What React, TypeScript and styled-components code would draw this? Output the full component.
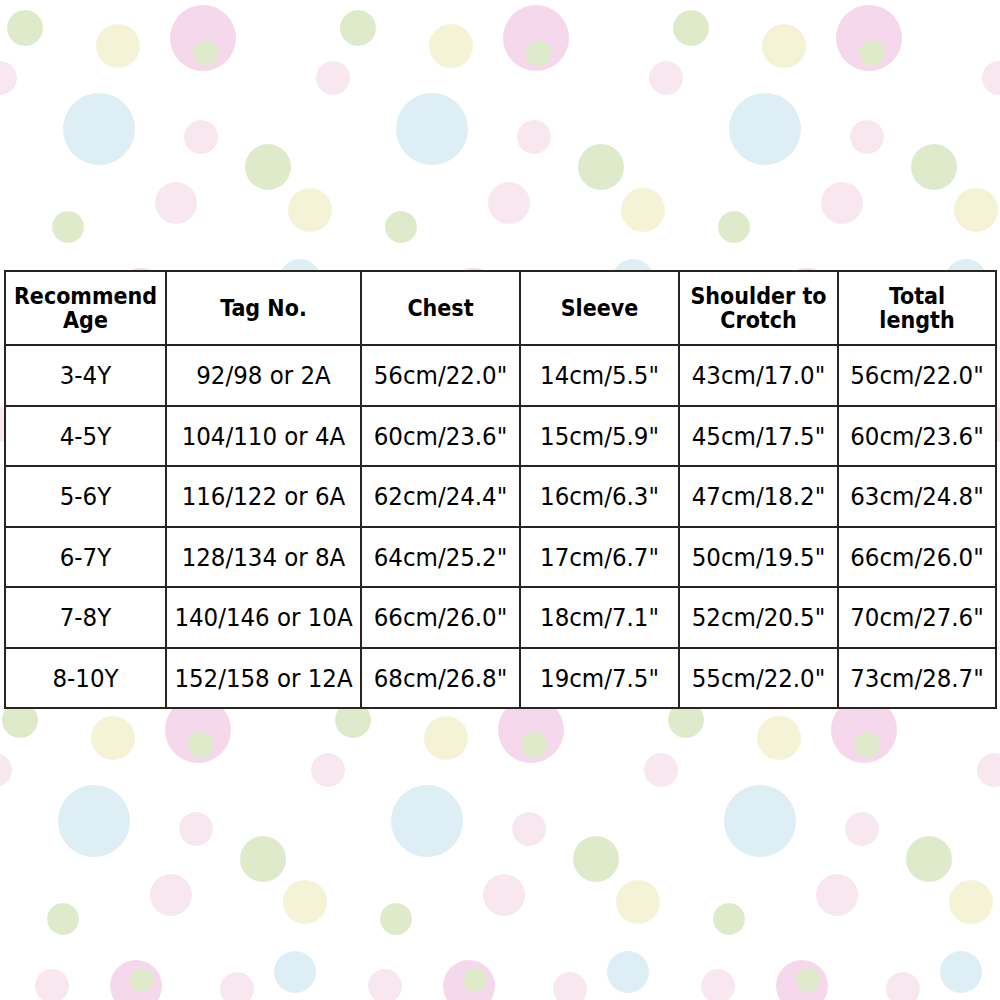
import { FunctionComponent } from 'react';
import styled, { createGlobalStyle } from 'styled-components';

// one tile of the polka dot wallpaper: [x, y, radius, colour]
const GREEN = '#dfeaca';
const YELLOW = '#f5f3d6';
const PINK = '#f5d8ec';
const PINK_LIGHT = '#f9e7f0';
const BLUE = '#deeef5';

const dots: [number, number, number, string][] = [
  [206, 53, 13, GREEN],
  [147, 288, 12, GREEN],
  [25, 28, 18, GREEN],
  [118, 46, 22, YELLOW],
  [203, 38, 33, PINK],
  [0, 78, 17, PINK_LIGHT],
  [333, 78, 17, PINK_LIGHT],
  [99, 129, 36, BLUE],
  [201, 137, 17, PINK_LIGHT],
  [268, 167, 23, GREEN],
  [176, 203, 21, PINK_LIGHT],
  [310, 210, 22, YELLOW],
  [68, 227, 16, GREEN],
  [57, 294, 17, PINK_LIGHT],
  [141, 294, 26, PINK],
  [242, 297, 17, PINK_LIGHT],
  [300, 280, 21, BLUE],
];

const dotLayers = dots
  .map(
    ([x, y, r, c]) =>
      `radial-gradient(circle ${r}px at ${x}px ${y}px, ${c} ${r - 0.6}px, transparent ${r + 0.4}px)`
  )
  .join(', ');

const GlobalStyle = createGlobalStyle`
  html, body {
    margin: 0;
    padding: 0;
    background: #fff;
  }
`;

const SPage = styled.div`
  width: 1000px;
  height: 1000px;
  display: flex;
  flex-direction: column;
  background-color: #fff;
  background-image: ${dotLayers};
  background-size: 333px 347px;
  background-repeat: repeat;
  font-family: 'DejaVu Sans Condensed', 'DejaVu Sans', sans-serif;
  font-stretch: condensed;
  color: #000;
  overflow: hidden;
`;

const STableWrap = styled.div`
  padding: 270px 3px 0 4px;
`;

const SBottom = styled.div<{ $shiftX: number; $shiftY: number }>`
  flex: 1;
  background-color: #fff;
  background-image: ${dotLayers};
  background-size: 333px 347px;
  background-position: ${(p) => `${p.$shiftX}px ${p.$shiftY}px`};
`;

const STable = styled.table`
  border-collapse: separate;
  border-spacing: 0;
  table-layout: fixed;
  width: 993px;
  border-top: 2px solid #2a2421;
  border-left: 2px solid #2a2421;
  background: #fff;
`;

const SCol = styled.col<{ $w: number }>`
  width: ${(p) => p.$w}px;
`;

const SHead = styled.th`
  height: 72px;
  padding: 0 2px;
  border-right: 2px solid #2a2421;
  border-bottom: 2px solid #2a2421;
  font-size: 23px;
  line-height: 24px;
  font-weight: bold;
  text-align: center;
  vertical-align: middle;
  white-space: nowrap;
`;

const SCell = styled.td`
  height: 58.5px;
  padding: 0;
  border-right: 2px solid #2a2421;
  border-bottom: 2px solid #2a2421;
  font-size: 25.5px;
  text-align: center;
  vertical-align: middle;
  white-space: nowrap;
`;

const columns: { lines: string[]; w: number }[] = [
  { lines: ['Recommend', 'Age'], w: 161 },
  { lines: ['Tag No.'], w: 195 },
  { lines: ['Chest'], w: 159 },
  { lines: ['Sleeve'], w: 159 },
  { lines: ['Shoulder to', 'Crotch'], w: 159 },
  { lines: ['Total', 'length'], w: 158 },
];

const rows: string[][] = [
  ['3-4Y', '92/98 or 2A', '56cm/22.0"', '14cm/5.5"', '43cm/17.0"', '56cm/22.0"'],
  ['4-5Y', '104/110 or 4A', '60cm/23.6"', '15cm/5.9"', '45cm/17.5"', '60cm/23.6"'],
  ['5-6Y', '116/122 or 6A', '62cm/24.4"', '16cm/6.3"', '47cm/18.2"', '63cm/24.8"'],
  ['6-7Y', '128/134 or 8A', '64cm/25.2"', '17cm/6.7"', '50cm/19.5"', '66cm/26.0"'],
  ['7-8Y', '140/146 or 10A', '66cm/26.0"', '18cm/7.1"', '52cm/20.5"', '70cm/27.6"'],
  ['8-10Y', '152/158 or 12A', '68cm/26.8"', '19cm/7.5"', '55cm/22.0"', '73cm/28.7"'],
];

const SizeTable: FunctionComponent = () => (
  <STable>
    <colgroup>
      {columns.map((c) => (
        <SCol key={c.lines.join(' ')} $w={c.w} />
      ))}
    </colgroup>
    <thead>
      <tr>
        {columns.map((c) => (
          <SHead key={c.lines.join(' ')}>
            {c.lines.map((l, i) => (
              <span key={l}>
                {i > 0 && <br />}
                {l}
              </span>
            ))}
          </SHead>
        ))}
      </tr>
    </thead>
    <tbody>
      {rows.map((r) => (
        <tr key={r[0]}>
          {r.map((v, i) => (
            <SCell key={i}>{v}</SCell>
          ))}
        </tr>
      ))}
    </tbody>
  </STable>
);

const App: FunctionComponent = () => (
  <SPage>
    <GlobalStyle />
    <STableWrap>
      <SizeTable />
    </STableWrap>
    <SBottom $shiftX={-5} $shiftY={-17} />
  </SPage>
);

export default App;
